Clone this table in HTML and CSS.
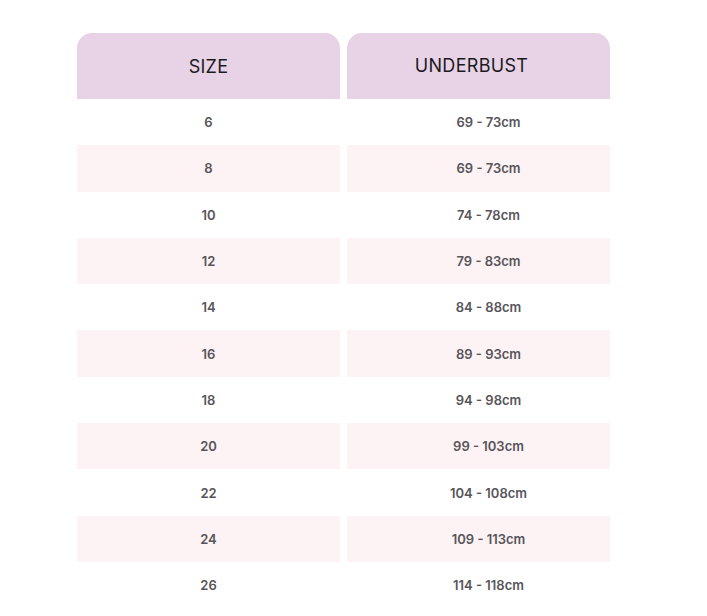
FILE: index.html
```html
<!DOCTYPE html>
<html lang="en">
<head>
<meta charset="utf-8">
<title>Size chart</title>
<link rel="stylesheet" href="styles.css">
</head>
<body>
<div class="chart">
  <div class="col">
    <div class="head">SIZE</div>
    <div class="cell">6</div>
    <div class="cell alt">8</div>
    <div class="cell">10</div>
    <div class="cell alt">12</div>
    <div class="cell">14</div>
    <div class="cell alt">16</div>
    <div class="cell">18</div>
    <div class="cell alt">20</div>
    <div class="cell">22</div>
    <div class="cell alt">24</div>
    <div class="cell">26</div>
  </div>
  <div class="col col-right">
    <div class="head">UNDERBUST</div>
    <div class="cell">69 - 73cm</div>
    <div class="cell alt">69 - 73cm</div>
    <div class="cell">74 - 78cm</div>
    <div class="cell alt">79 - 83cm</div>
    <div class="cell">84 - 88cm</div>
    <div class="cell alt">89 - 93cm</div>
    <div class="cell">94 - 98cm</div>
    <div class="cell alt">99 - 103cm</div>
    <div class="cell">104 - 108cm</div>
    <div class="cell alt">109 - 113cm</div>
    <div class="cell">114 - 118cm</div>
  </div>
</div>
</body>
</html>
```
FILE: styles.css
```css
html, body {
  margin: 0;
  padding: 0;
  background: #ffffff;
}
body {
  font-family: Inter, "Open Sans", sans-serif;
}
.chart {
  display: flex;
  gap: 7px;
  padding: 33px 0 0 77px;
}
.col {
  width: 263px;
  display: flex;
  flex-direction: column;
}
.head {
  height: 66px;
  box-sizing: border-box;
  background: #e8d3e6;
  border-radius: 15px 15px 0 0;
  display: flex;
  align-items: center;
  justify-content: center;
  font-size: 18px;
  font-weight: 400;
  color: #1c1a1f;
  letter-spacing: 0.3px;
}
.cell {
  height: 46.3px;
  box-sizing: border-box;
  display: flex;
  align-items: center;
  justify-content: center;
  font-size: 13px;
  font-weight: 600;
  color: #57555a;
}
.col-right .head {
  padding-right: 14px;
  padding-bottom: 2px;
}
.col-right .cell {
  padding-left: 20px;
}
.alt {
  background: #fdf2f4;
}
```
